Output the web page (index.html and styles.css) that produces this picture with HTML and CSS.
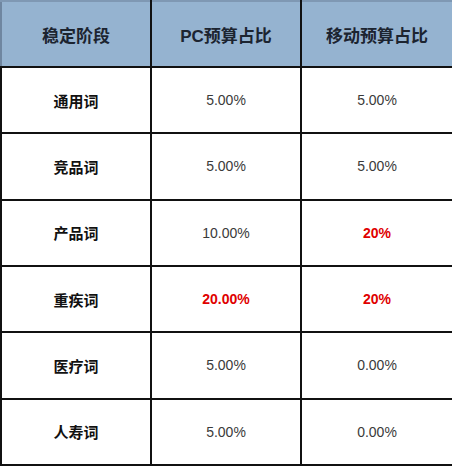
FILE: index.html
```html
<!DOCTYPE html>
<html lang="zh">
<head>
<meta charset="utf-8">
<link rel="stylesheet" href="styles.css">
</head>
<body>
<table class="budget">
  <colgroup>
    <col class="c1"><col class="c2"><col class="c3">
  </colgroup>
  <thead>
    <tr><th>稳定阶段</th><th>PC预算占比</th><th>移动预算占比</th></tr>
  </thead>
  <tbody>
    <tr><td class="name">通用词</td><td>5.00%</td><td>5.00%</td></tr>
    <tr><td class="name">竞品词</td><td>5.00%</td><td>5.00%</td></tr>
    <tr><td class="name">产品词</td><td>10.00%</td><td class="hot">20%</td></tr>
    <tr><td class="name">重疾词</td><td class="hot">20.00%</td><td class="hot">20%</td></tr>
    <tr><td class="name">医疗词</td><td>5.00%</td><td>0.00%</td></tr>
    <tr><td class="name">人寿词</td><td>5.00%</td><td>0.00%</td></tr>
  </tbody>
</table>
</body>
</html>
```

FILE: styles.css
```css
html, body {
  margin: 0;
  padding: 0;
  background: #ffffff;
}

.budget {
  width: 452px;
  height: 466px;
  border-collapse: collapse;
  table-layout: fixed;
  font-family: "Liberation Sans", Arial, "Noto Sans CJK SC", sans-serif;
}

.c1 { width: 150px; }
.c2 { width: 150px; }
.c3 { width: 152px; }

.budget th,
.budget td {
  border: 2px solid #111111;
  text-align: center;
  vertical-align: middle;
  padding: 0;
  height: 64px;
}

.budget thead tr {
  height: 66px;
}

.budget th {
  background: #95b3d0;
  color: #1c2430;
  font-size: 17px;
  font-weight: bold;
  border-top-color: #7f98b3;
  border-left-color: #6f86a0;
}

.budget td {
  font-size: 14px;
  color: #3a3a3a;
}

.budget td.name {
  font-size: 15px;
  font-weight: bold;
  color: #111111;
}

.budget td.hot {
  color: #e00000;
  font-weight: bold;
}
```
